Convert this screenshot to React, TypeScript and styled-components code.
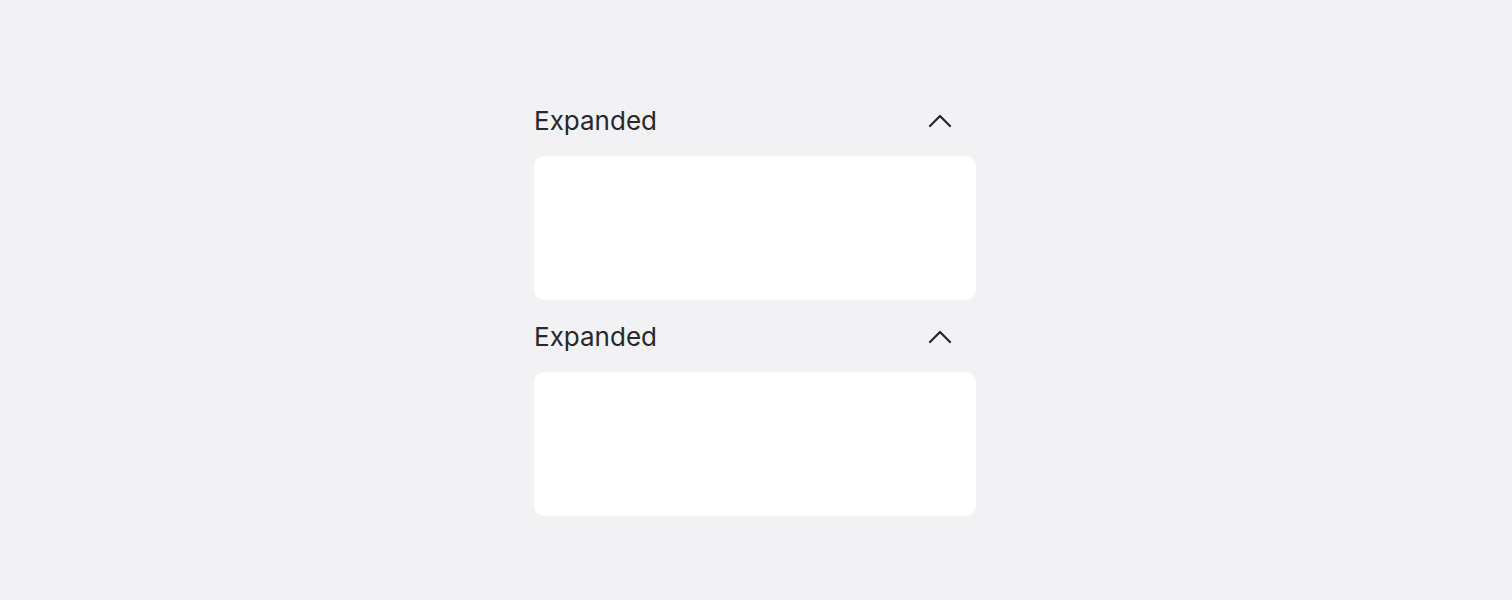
import * as React from 'react';
import styled, { createGlobalStyle } from 'styled-components';

const GlobalStyle = createGlobalStyle`
  html, body {
    margin: 0;
    padding: 0;
    background: #f2f2f4;
  }
  body {
    font-family: Inter, 'Noto Sans', sans-serif;
  }
`;

const sections = ['Expanded', 'Expanded'];

const ChevronUp = () => (
  <svg width="24" height="24" viewBox="0 0 24 24" fill="none">
    <polyline
      points="2,17 12,7 22,17"
      stroke="#26262b"
      strokeWidth="2.2"
      strokeLinecap="round"
      strokeLinejoin="round"
    />
  </svg>
);

const App: React.FC = () => (
  <>
    <GlobalStyle />
    <Page>
      <Stack>
        {sections.map((title, i) => (
          <Section key={i}>
            <Header>
              <Title>{title}</Title>
              <Toggle aria-label="Collapse">
                <ChevronUp />
              </Toggle>
            </Header>
            <Panel />
          </Section>
        ))}
      </Stack>
    </Page>
  </>
);

export default App;

const Page = styled.div`
  width: 100%;
  height: 600px;
  box-sizing: border-box;
  padding-top: 96px;
  display: flex;
  justify-content: center;
`;

const Stack = styled.div`
  width: 442px;
  display: flex;
  flex-direction: column;
  gap: 12px;
  margin-right: 2px;
`;

const Section = styled.section`
  display: flex;
  flex-direction: column;
  gap: 10px;
`;

const Header = styled.div`
  height: 50px;
  display: flex;
  align-items: center;
  justify-content: space-between;
  padding-right: 24px;
`;

const Title = styled.h3`
  margin: 0 0 2px;
  font-size: 26px;
  font-weight: 400;
  color: #27272c;
`;

const Toggle = styled.button`
  border: none;
  background: none;
  padding: 0;
  width: 24px;
  height: 24px;
  display: flex;
  cursor: pointer;
`;

const Panel = styled.div`
  height: 144px;
  background: #ffffff;
  border-radius: 10px;
`;
